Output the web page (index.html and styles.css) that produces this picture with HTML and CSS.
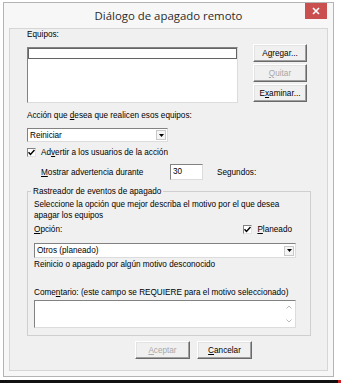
FILE: index.html
```html
<!DOCTYPE html>
<html lang="es">
<head>
<meta charset="utf-8">
<title>Diálogo de apagado remoto</title>
<link rel="stylesheet" href="styles.css">
</head>
<body>
<div class="window">
  <div class="titlebar">
    <div class="title">Diálogo de apagado remoto</div>
    <div class="close">
      <svg width="8" height="8" viewBox="0 0 8 8"><path d="M1 1L7 7M7 1L1 7" stroke="#fff" stroke-width="1.6"/></svg>
    </div>
  </div>
  <div class="client">
    <div class="label">Equipos:</div>
    <div class="computers">
      <div class="field listbox"><div class="listitem"></div></div>
      <div class="btncol">
        <button class="btn">A<u>g</u>regar...</button>
        <button class="btn" disabled><u>Q</u>uitar</button>
        <button class="btn">E<u>x</u>aminar...</button>
      </div>
    </div>

    <div class="label action-label">Acción que <u>d</u>esea que realicen esos equipos:</div>
    <div class="field combo action-combo">
      <span class="value">Reiniciar</span>
      <span class="drop"><svg width="5" height="3" viewBox="0 0 5 3"><path d="M0 0H5L2.5 3Z" fill="#000"/></svg></span>
    </div>

    <div class="checkrow warn">
      <span class="check"><svg width="7" height="7" viewBox="0 0 7 7"><path d="M0.5 3.2L2.5 5.4L6.5 1" stroke="#000" stroke-width="1.5" fill="none"/></svg></span>
      <span>Ad<u>v</u>ertir a los usuarios de la acción</span>
    </div>

    <div class="timerow">
      <span class="timelabel"><u>M</u>ostrar advertencia durante</span>
      <div class="field timebox">30</div>
      <span class="unit">Segundos:</span>
    </div>

    <fieldset class="tracker">
      <legend>Rastreador de eventos de apagado</legend>
      <p class="hint">Seleccione la opción que mejor describa el motivo por el que desea apagar los equipos</p>
      <div class="optrow">
        <span><u>O</u>pción:</span>
        <span class="checkrow">
          <span class="check"><svg width="7" height="7" viewBox="0 0 7 7"><path d="M0.5 3.2L2.5 5.4L6.5 1" stroke="#000" stroke-width="1.5" fill="none"/></svg></span>
          <span><u>P</u>laneado</span>
        </span>
      </div>
      <div class="field combo reason-combo">
        <span class="value">Otros (planeado)</span>
        <span class="drop"><svg width="5" height="3" viewBox="0 0 5 3"><path d="M0 0H5L2.5 3Z" fill="#000"/></svg></span>
      </div>
      <div class="desc">Reinicio o apagado por algún motivo desconocido</div>
      <div class="label comment-label">Come<u>n</u>tario: (este campo se REQUIERE para el motivo seleccionado)</div>
      <div class="field comment">
        <div class="scroll">
          <svg width="6" height="4" viewBox="0 0 6 4"><path d="M0.5 3.5L3 1L5.5 3.5" stroke="#b9b9b9" fill="none"/></svg>
          <svg width="6" height="4" viewBox="0 0 6 4"><path d="M0.5 0.5L3 3L5.5 0.5" stroke="#b9b9b9" fill="none"/></svg>
        </div>
      </div>
    </fieldset>

    <div class="actions">
      <button class="btn" disabled><u>A</u>ceptar</button>
      <button class="btn"><u>C</u>ancelar</button>
    </div>
  </div>
</div>
<div class="taskbar"><span class="mark"></span></div>
</body>
</html>
```

FILE: styles.css
```css
body{
  margin: 0;
  background-color: #fff;
  font-family: "Liberation Sans", Arial, sans-serif;
  font-size: 8.2px;
  line-height: 11px;
  color: #000;
}

.window{
  margin: 2px 0 0 3px;
  width: 331px;
  height: 375px;
  box-sizing: border-box;
  border: 1px solid #b4b4b4;
  background-color: #f7f7f7;
  padding: 0 5px 5px 5px;
  display: flex;
  flex-direction: column;
}

.titlebar{
  height: 25px;
  display: grid;
  grid-template-columns: 1fr auto 1fr;
  align-items: center;
}
.title{
  grid-column: 2;
  font-family: "Open Sans", "Noto Sans", sans-serif;
  font-size: 11.4px;
  color: #2b2b2b;
}
.close{
  grid-column: 3;
  justify-self: end;
  align-self: start;
  margin-right: 1px;
  width: 22px;
  height: 16px;
  background-color: #c9504e;
  display: flex;
  align-items: center;
  justify-content: center;
}

.client{
  flex: 1;
  border: 1px solid #d6d6d6;
  background-color: #f0f0f0;
  padding-left: 17px;
  display: flex;
  flex-direction: column;
  align-items: flex-start;
}

/* sunken white boxes */
.field{
  box-sizing: border-box;
  background-color: #fff;
  border: 1px solid;
  border-color: #828282 #dcdcdc #dcdcdc #828282;
}

.computers{
  margin-top: 4px;
  display: flex;
  gap: 15px;
}
.listbox{
  margin-top: 3px;
  width: 211px;
  height: 56px;
  padding: 0;
}
.listitem{
  height: 9px;
  border: 1px solid #646464;
}
.btncol{
  display: flex;
  flex-direction: column;
  gap: 2px;
}

.btn{
  width: 54px;
  height: 18px;
  margin: 0;
  padding: 0;
  box-sizing: border-box;
  font: inherit;
  color: #000;
  background-color: #f0f0f0;
  border: 1px solid;
  border-color: #fff #696969 #696969 #fff;
  box-shadow: inset -1px -1px #a0a0a0, inset 1px 1px #e3e3e3;
}
.btn:disabled{
  color: #a8a8a8;
}

.action-label{
  margin-top: 7px;
}
.combo{
  display: flex;
  align-items: center;
  padding: 0 1px 0 2px;
}
.combo .value{
  flex: 1;
}
.drop{
  width: 10px;
  height: 10px;
  box-sizing: border-box;
  border: 1px solid #c8c8c8;
  background-color: #f4f4f4;
  display: flex;
  align-items: center;
  justify-content: center;
}
.action-combo{
  margin-top: 7px;
  width: 141px;
  height: 14px;
}

.checkrow{
  display: flex;
  align-items: center;
  gap: 5px;
}
.warn{
  margin-top: 5px;
}
.check{
  width: 9px;
  height: 9px;
  box-sizing: border-box;
  background-color: #fff;
  border: 1px solid;
  border-color: #828282 #e3e3e3 #e3e3e3 #828282;
  display: flex;
  align-items: center;
  justify-content: center;
}

.timerow{
  margin-top: 6px;
  margin-left: 14px;
  display: flex;
  align-items: center;
}
.timelabel{
  width: 129px;
}
.timebox{
  width: 33px;
  height: 16px;
  padding-left: 2px;
  line-height: 14px;
}
.unit{
  margin-left: 14px;
}

.tracker{
  margin: 6px 0 0 0;
  width: 284px;
  box-sizing: border-box;
  border: 1px solid #cfcfcf;
  padding: 2px 13px 7px 6px;
  min-width: 0;
}
.tracker legend{
  margin-left: -3px;
  padding: 0 2px;
}
.hint{
  margin: 0;
  width: 262px;
}
.optrow{
  margin-top: 3px;
  width: 262px;
  box-sizing: border-box;
  padding-right: 4px;
  display: flex;
  justify-content: space-between;
  align-items: center;
}
.reason-combo{
  margin-top: 8px;
  width: 262px;
  height: 15px;
}
.desc{
  margin-top: 1px;
}
.comment-label{
  margin-top: 17px;
  white-space: nowrap;
}
.comment{
  margin-top: 2px;
  width: 262px;
  height: 28px;
  display: flex;
  justify-content: flex-end;
}
.scroll{
  width: 12px;
  display: flex;
  flex-direction: column;
  align-items: center;
  justify-content: space-between;
  padding: 4px 0 4px 0;
}

.actions{
  margin: 5px 0 0 108px;
  display: flex;
  gap: 7px;
}
.actions .btn{
  width: 55px;
}

.taskbar{
  margin-top: 3px;
  height: 3px;
  background-color: #111;
  display: flex;
  justify-content: flex-end;
}
.taskbar .mark{
  width: 3px;
  background-color: #d02020;
}
```
